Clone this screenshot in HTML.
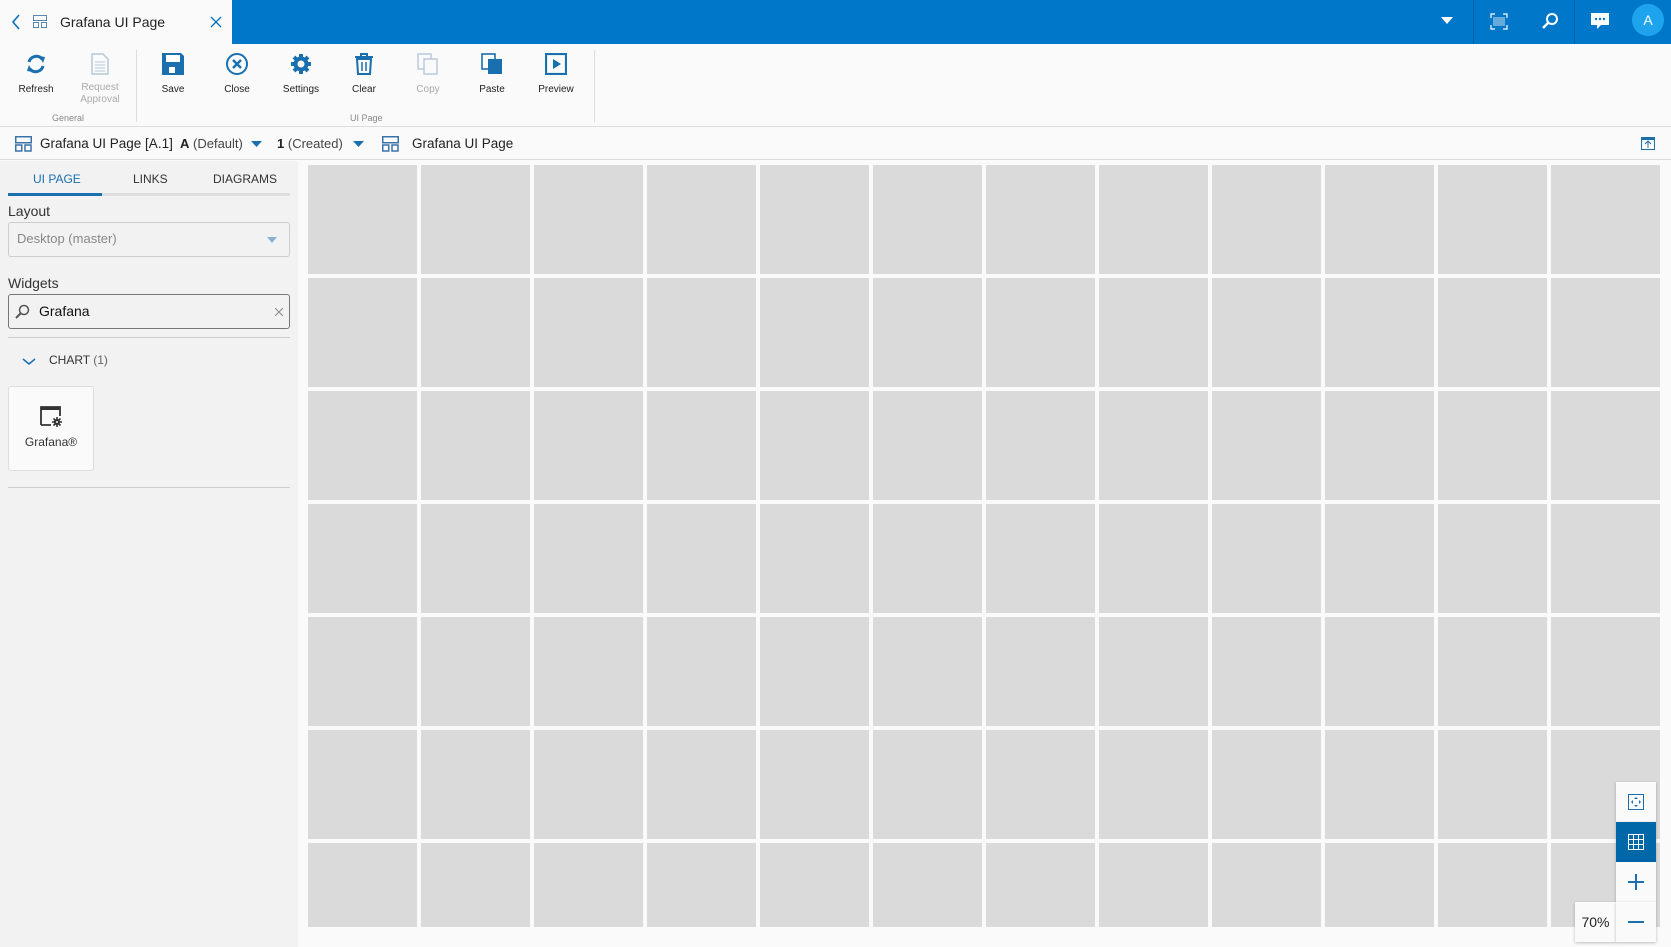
<!DOCTYPE html>
<html><head><meta charset="utf-8"><style>
*{box-sizing:border-box;margin:0;padding:0}
body{width:1671px;height:947px;overflow:hidden;font-family:"Liberation Sans",sans-serif;background:#fafafa;position:relative;color:#222}
.abs{position:absolute}
.hdr{left:0;top:0;width:1671px;height:44px;background:#0077c8}
.tab{left:0;top:0;width:232px;height:44px;background:#fafafa}
.tb{top:44px;left:0;width:1671px;height:83px;background:#fafafa;border-bottom:1px solid #ddd}
.btn{position:absolute;top:9px;width:64px;text-align:center;font-size:10px;color:#222}
.btn svg{display:block;margin:0 auto 9px}
.dis{color:#aaa}
.grp{position:absolute;top:69px;font-size:9px;color:#888}
.bc{top:128px;left:0;width:1671px;height:32px;border-bottom:1px solid #ddd;font-size:14px}
.side{left:0;top:161px;width:298px;height:786px;background:#f2f2f2}
.grid{left:308px;top:165px;width:1352px;height:762px;overflow:hidden}
.cell{position:absolute;width:109px;height:109px;background:#dadada}
.zb{position:absolute;width:40px;height:40px;background:#fafafa;box-shadow:0 1px 3px rgba(0,0,0,.25)}
</style></head><body>
<div class="abs hdr"></div>
<div class="abs tab">
<svg class="abs" style="left:11px;top:13px" width="10" height="18"><path d="M8 2 L2 9 L8 16" stroke="#0a6fb5" stroke-width="1.6" fill="none"/></svg>
<svg class="abs" style="left:33px;top:15px" width="14" height="13"><rect x=".5" y=".5" width="13" height="5" fill="none" stroke="#5a86b0"/><rect x=".5" y="7.5" width="5" height="5" fill="none" stroke="#5a86b0"/><rect x="8.5" y="7.5" width="5" height="5" fill="none" stroke="#5a86b0"/></svg>
<div class="abs" style="left:60px;top:14px;font-size:14px">Grafana UI Page</div>
<svg class="abs" style="left:210px;top:16px" width="12" height="12"><path d="M1 1L11 11M11 1L1 11" stroke="#0a6fb5" stroke-width="1.3"/></svg>
</div>
<svg class="abs" style="left:1441px;top:17px" width="12" height="8"><path d="M0 0H12L6 7Z" fill="#fff"/></svg>
<div class="abs" style="left:1473px;top:0;width:1px;height:44px;background:#0060a8"></div>
<div class="abs" style="left:1574px;top:0;width:1px;height:44px;background:#0060a8"></div>
<svg class="abs" style="left:1490px;top:13px" width="18" height="17"><path d="M1 5V1H5M13 1H17V5M17 12V16H13M5 16H1V12" stroke="#fff" fill="none" stroke-width="1.2"/><path d="M4 4V13M6 4V13M8 4V13M10 4V13M12 4V13M14 4V13" stroke="#cde" stroke-width="1"/></svg>
<svg class="abs" style="left:1541px;top:12px" width="18" height="18"><circle cx="11" cy="7" r="5" stroke="#fff" stroke-width="2" fill="none"/><path d="M7.5 10.5L2 16" stroke="#fff" stroke-width="2.5"/></svg>
<svg class="abs" style="left:1591px;top:13px" width="18" height="17"><path d="M0 0H18V12H10L6 16V12H0Z" fill="#fff"/><circle cx="5" cy="6" r="1.2" fill="#0077c8"/><circle cx="9" cy="6" r="1.2" fill="#0077c8"/><circle cx="13" cy="6" r="1.2" fill="#0077c8"/></svg>
<div class="abs" style="left:1632px;top:4px;width:32px;height:32px;border-radius:50%;background:#1ea4ef;color:#fff;font-size:14px;text-align:center;line-height:32px">A</div>

<div class="abs tb">
<div class="btn" style="left:4px"><svg width="22" height="22" viewBox="0 0 22 22"><path d="M4 9A7.5 7.5 0 0 1 17 6" stroke="#1a6fae" stroke-width="3" fill="none"/><path d="M14 3L20 4L18 10Z" fill="#1a6fae"/><path d="M18 13A7.5 7.5 0 0 1 5 16" stroke="#1a6fae" stroke-width="3" fill="none"/><path d="M8 19L2 18L4 12Z" fill="#1a6fae"/></svg>Refresh</div>
<div class="btn dis" style="left:68px;line-height:12px"><svg width="18" height="22" style="margin-bottom:7px"><path d="M1 1H12L17 6V21H1Z" fill="none" stroke="#b5c8d8" stroke-width="1.5"/><path d="M4 9H14M4 12H14M4 15H14M4 18H14" stroke="#b5c8d8"/></svg>Request<br>Approval</div>
<div class="grp" style="left:52px">General</div>
<div class="abs" style="left:136px;top:6px;width:1px;height:72px;background:#ddd"></div>
<div class="btn" style="left:141px"><svg width="22" height="22"><path d="M0 0H19L22 3V22H0Z" fill="#1a6fae"/><rect x="4" y="2" width="14" height="7" fill="#fff"/><rect x="7" y="14" width="6" height="6" fill="#fff"/></svg>Save</div>
<div class="btn" style="left:205px"><svg width="24" height="22" viewBox="0 1 24 22"><circle cx="12" cy="12" r="10" stroke="#1a6fae" stroke-width="2" fill="none"/><path d="M8 8L16 16M16 8L8 16" stroke="#1a6fae" stroke-width="2.5"/></svg>Close</div>
<div class="btn" style="left:269px"><svg width="24" height="22" viewBox="0 1 24 22"><circle cx="12" cy="12" r="7.5" fill="#1a6fae"/><g stroke="#1a6fae" stroke-width="4"><path d="M12 2V22M2 12H22M5 5L19 19M19 5L5 19"/></g><circle cx="12" cy="12" r="3.5" fill="#fafafa"/></svg>Settings</div>
<div class="btn" style="left:332px"><svg width="20" height="22"><path d="M1 4H19M7 4V1H13V4" stroke="#1a6fae" stroke-width="2" fill="none"/><path d="M3 6H17L16 21H4Z" fill="none" stroke="#1a6fae" stroke-width="2"/><path d="M8 9V18M12 9V18" stroke="#1a6fae" stroke-width="1.5"/></svg>Clear</div>
<div class="btn dis" style="left:396px"><svg width="22" height="22"><rect x="1" y="1" width="13" height="15" fill="none" stroke="#b5c8d8" stroke-width="1.4"/><rect x="7" y="6" width="13" height="15" fill="#fafafa" stroke="#b5c8d8" stroke-width="1.4"/></svg>Copy</div>
<div class="btn" style="left:460px"><svg width="22" height="22"><rect x="1" y="1" width="13" height="15" fill="none" stroke="#1a6fae" stroke-width="1.6"/><rect x="7" y="6" width="14" height="15" fill="#1a6fae"/></svg>Paste</div>
<div class="btn" style="left:524px"><svg width="22" height="22"><rect x="1" y="1" width="20" height="20" fill="none" stroke="#1a6fae" stroke-width="2.2"/><path d="M8 6L16 11L8 16Z" fill="#1a6fae"/></svg>Preview</div>
<div class="grp" style="left:350px">UI Page</div>
<div class="abs" style="left:594px;top:6px;width:1px;height:72px;background:#ddd"></div>
</div>

<div class="abs bc">
<svg class="abs" style="left:15px;top:8px" width="17" height="16"><rect x=".75" y=".75" width="15.5" height="6" fill="none" stroke="#3a73a8" stroke-width="1.5"/><rect x=".75" y="9" width="6" height="6" fill="none" stroke="#3a73a8" stroke-width="1.5"/><rect x="10" y="9" width="6" height="6" fill="none" stroke="#3a73a8" stroke-width="1.5"/></svg>
<div class="abs" style="left:40px;top:8px;font-size:13.5px">Grafana UI Page [A.1]</div>
<div class="abs" style="left:180px;top:8px;font-size:13px"><b>A</b> <span style="color:#444">(Default)</span></div>
<svg class="abs" style="left:251px;top:13px" width="11" height="7"><path d="M0 0H11L5.5 6Z" fill="#1a6fae"/></svg>
<div class="abs" style="left:277px;top:8px;font-size:13px"><b>1</b> <span style="color:#444">(Created)</span></div>
<svg class="abs" style="left:353px;top:13px" width="11" height="7"><path d="M0 0H11L5.5 6Z" fill="#1a6fae"/></svg>
<svg class="abs" style="left:382px;top:8px" width="17" height="16"><rect x=".75" y=".75" width="15.5" height="6" fill="none" stroke="#3a73a8" stroke-width="1.5"/><rect x=".75" y="9" width="6" height="6" fill="none" stroke="#3a73a8" stroke-width="1.5"/><rect x="10" y="9" width="6" height="6" fill="none" stroke="#3a73a8" stroke-width="1.5"/></svg>
<div class="abs" style="left:412px;top:8px;font-size:13.5px">Grafana UI Page</div>
<svg class="abs" style="left:1641px;top:9px" width="14" height="13"><rect x=".5" y=".5" width="13" height="12" fill="#fff" stroke="#1a6fae"/><rect x="0" y="0" width="14" height="3" fill="#1a6fae"/><path d="M7 11V5M4 7L7 4L10 7" stroke="#1a6fae" fill="none"/></svg>
</div>

<div class="abs side">
<div class="abs" style="left:8px;top:11px;width:282px;font-size:12px;color:#333">
<span class="abs" style="left:25px;color:#1a6fae">UI PAGE</span><span class="abs" style="left:125px">LINKS</span><span class="abs" style="left:205px">DIAGRAMS</span></div>
<div class="abs" style="left:8px;top:32px;width:282px;height:3px;background:#ddd"></div>
<div class="abs" style="left:8px;top:32px;width:94px;height:3px;background:#1a6fae"></div>
<div class="abs" style="left:8px;top:42px;font-size:14px;color:#333">Layout</div>
<div class="abs" style="left:8px;top:61px;width:282px;height:35px;border:1px solid #ccc;border-radius:3px;font-size:13px;color:#888;padding:8px 8px">Desktop (master)</div>
<svg class="abs" style="left:267px;top:76px" width="10" height="6"><path d="M0 0H10L5 6Z" fill="#8ab0cc"/></svg>
<div class="abs" style="left:8px;top:114px;font-size:14px;color:#333">Widgets</div>
<div class="abs" style="left:8px;top:133px;width:282px;height:35px;border:1px solid #777;border-radius:3px;font-size:14px;color:#111;padding:8px 0 0 30px">Grafana</div>
<svg class="abs" style="left:14px;top:143px" width="16" height="16"><circle cx="10" cy="6" r="4.5" stroke="#555" stroke-width="1.5" fill="none"/><path d="M7 9L2 14" stroke="#555" stroke-width="2"/></svg>
<svg class="abs" style="left:275px;top:147px" width="8" height="8"><path d="M0 0L8 8M8 0L0 8" stroke="#888"/></svg>
<div class="abs" style="left:8px;top:176px;width:282px;height:1px;background:#ccc"></div>
<svg class="abs" style="left:22px;top:197px" width="14" height="8"><path d="M1 1L7 6L13 1" stroke="#1a6fae" stroke-width="1.5" fill="none"/></svg>
<div class="abs" style="left:49px;top:192px;font-size:12px;color:#333">CHART <span style="color:#666">(1)</span></div>
<div class="abs" style="left:8px;top:225px;width:86px;height:85px;background:#fafafa;border:1px solid #ddd;border-radius:3px"></div>
<svg class="abs" style="left:40px;top:245px" width="24" height="22"><path d="M1 19V1H20V10M1 19H11" stroke="#333" stroke-width="1.8" fill="none"/><rect x="1" y="1" width="19" height="3" fill="#333"/><circle cx="17" cy="16" r="3" fill="#333"/><g stroke="#333" stroke-width="1.6"><path d="M17 11V21M12 16H22M13.5 12.5L20.5 19.5M20.5 12.5L13.5 19.5"/></g><circle cx="17" cy="16" r="1" fill="#fafafa"/></svg>
<div class="abs" style="left:8px;top:274px;width:86px;text-align:center;font-size:12px;color:#333">Grafana®</div>
<div class="abs" style="left:8px;top:326px;width:282px;height:1px;background:#ccc"></div>
</div>

<div class="abs grid" id="g"></div>
<script>
var g=document.getElementById('g'),h='';
for(var r=0;r<7;r++)for(var c=0;c<12;c++)h+='<div class="cell" style="left:'+(c*113)+'px;top:'+(r*113)+'px"></div>';
g.innerHTML=h;
</script>

<div class="zb" style="left:1616px;top:782px"><svg style="margin:12px" width="16" height="16"><rect x=".5" y=".5" width="15" height="15" fill="none" stroke="#1a6fae"/><path d="M8 3L10 5H6ZM8 13L6 11H10ZM3 8L5 6V10ZM13 8L11 10V6Z" fill="#1a6fae"/></svg></div>
<div class="zb" style="left:1616px;top:822px;background:#0067a8"><svg style="margin:12px" width="16" height="16"><rect x=".5" y=".5" width="15" height="15" fill="none" stroke="#fff"/><path d="M5.5 0V16M10.5 0V16M0 5.5H16M0 10.5H16" stroke="#fff"/></svg></div>
<div class="zb" style="left:1616px;top:862px"><svg style="margin:11px" width="18" height="18"><path d="M9 1V17M1 9H17" stroke="#1a6fae" stroke-width="2"/></svg></div>
<div class="zb" style="left:1575px;top:902px;width:41px;font-size:14px;text-align:center;line-height:40px">70%</div>
<div class="zb" style="left:1616px;top:902px"><svg style="margin:11px" width="18" height="18"><path d="M1 9H17" stroke="#1a6fae" stroke-width="2"/></svg></div>
</body></html>
